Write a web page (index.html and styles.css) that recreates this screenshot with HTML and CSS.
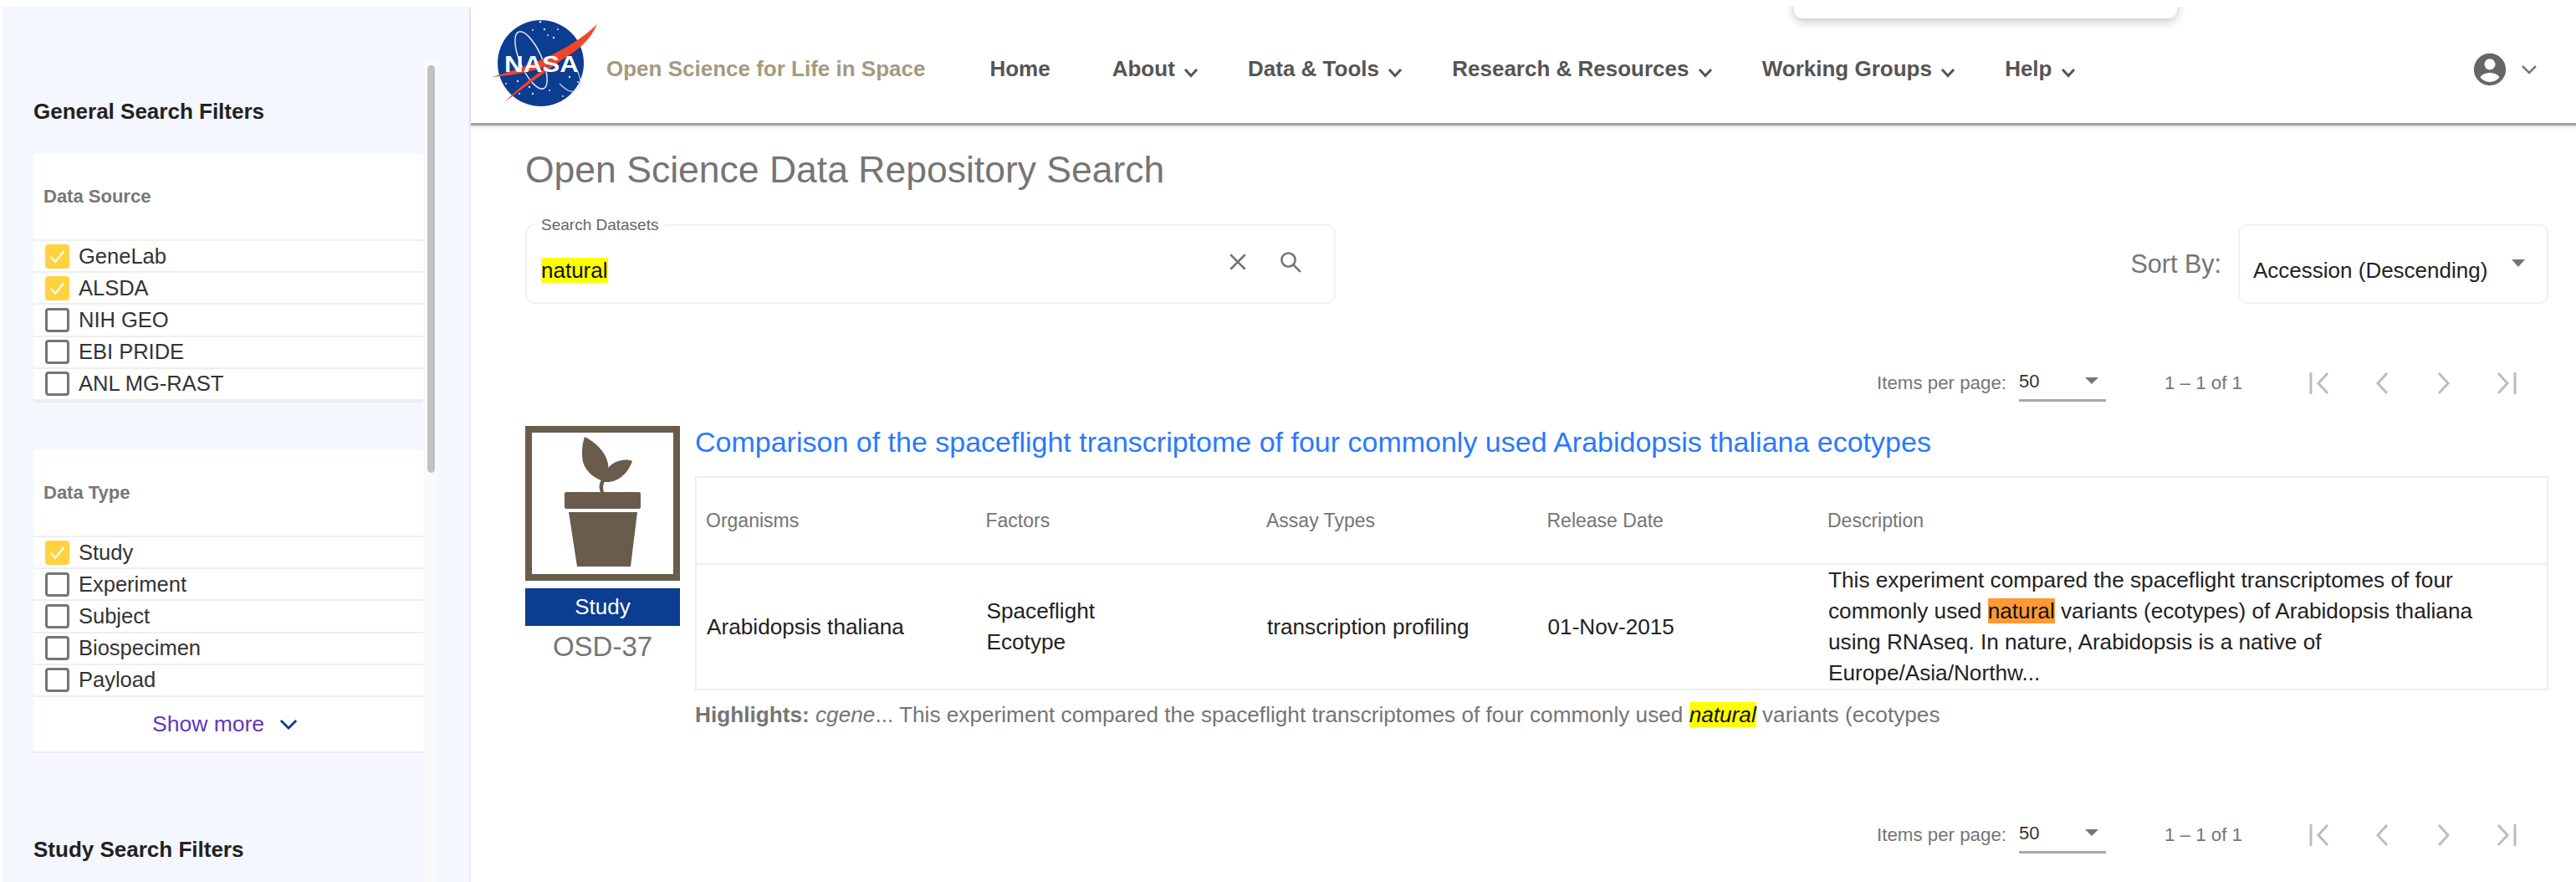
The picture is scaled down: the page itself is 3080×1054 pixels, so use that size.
FILE: index.html
```html
<!DOCTYPE html>
<html lang="en">
<head>
  <meta charset="UTF-8">
  <meta name="viewport" content="width=device-width, initial-scale=1.0">
  <title>Open Science Data Repository Search</title>
  <link rel="stylesheet" href="styles.css">
</head>
<body>
  <div class="page">
    <aside class="sidebar">
      <div class="filters">
        <h3 class="filters-title first">General Search Filters</h3>
        <section class="filter-card">
          <h4 class="filter-name">Data Source</h4>
          <label class="filter-row"><span class="box checked"><svg viewBox="0 0 24 24"><path d="M5 12.5l5 5 9-11"/></svg></span>GeneLab</label>
          <label class="filter-row"><span class="box checked"><svg viewBox="0 0 24 24"><path d="M5 12.5l5 5 9-11"/></svg></span>ALSDA</label>
          <label class="filter-row"><span class="box"></span>NIH GEO</label>
          <label class="filter-row"><span class="box"></span>EBI PRIDE</label>
          <label class="filter-row"><span class="box"></span>ANL MG-RAST</label>
        </section>
        <section class="filter-card second">
          <h4 class="filter-name">Data Type</h4>
          <label class="filter-row"><span class="box checked"><svg viewBox="0 0 24 24"><path d="M5 12.5l5 5 9-11"/></svg></span>Study</label>
          <label class="filter-row"><span class="box"></span>Experiment</label>
          <label class="filter-row"><span class="box"></span>Subject</label>
          <label class="filter-row"><span class="box"></span>Biospecimen</label>
          <label class="filter-row"><span class="box"></span>Payload</label>
          <div class="show-more">Show more
            <svg class="show-chevron" viewBox="0 0 24 14"><path d="M2 2l10 10L22 2"/></svg>
          </div>
        </section>
        <h3 class="filters-title">Study Search Filters</h3>
      </div>
      <div class="scroll-track"><div class="scroll-thumb"></div></div>
    </aside>

    <main class="main">
      <header class="nav">
        <svg class="logo" viewBox="0 0 130 112">
          <circle cx="61.5" cy="55.5" r="51.5" fill="#0b3d91"/>
          <ellipse cx="50" cy="52" rx="13" ry="37" transform="rotate(-24 50 52)" fill="none" stroke="#dfe6f2" stroke-width="1.5"/>
          <path d="M84 80c8 8 16 14 24 4 2-6 0-14-3-20" fill="none" stroke="#c9d5ea" stroke-width="1.2"/>
          <g fill="#dfe6f2">
            <circle cx="61" cy="6" r="1.3"/><circle cx="52" cy="16" r="1"/><circle cx="66" cy="15" r="1.2"/>
            <circle cx="70" cy="22" r="1"/><circle cx="82" cy="15" r="1"/><circle cx="77" cy="25" r="1.2"/>
            <circle cx="20" cy="80" r="1"/><circle cx="34" cy="77" r="1.2"/><circle cx="48" cy="84" r="1.2"/>
            <circle cx="36" cy="92" r="1"/><circle cx="52" cy="92" r="1.2"/><circle cx="72" cy="88" r="1"/>
            <circle cx="96" cy="72" r="1.2"/><circle cx="88" cy="95" r="1"/><circle cx="106" cy="78" r="1"/>
          </g>
          <path d="M3 72C40 62 95 42 129 9 112 48 62 68 3 72z" fill="#f0452a"/>
          <path d="M18 102C44 76 74 55 106 37 78 58 48 80 18 102z" fill="#f0452a"/>
          <text class="logo-text" x="18" y="66" textLength="89" lengthAdjust="spacingAndGlyphs">NASA</text>
        </svg>
        <span class="brand">Open Science for Life in Space</span>
        <nav class="nav-links">
          <a class="nav-link home">Home</a>
          <a class="nav-link">About <svg class="nav-chevron" viewBox="0 0 18 12"><path d="M2 2l7 7.500L16 2"/></svg></a>
          <a class="nav-link">Data &amp; Tools <svg class="nav-chevron" viewBox="0 0 18 12"><path d="M2 2l7 7.500L16 2"/></svg></a>
          <a class="nav-link">Research &amp; Resources <svg class="nav-chevron" viewBox="0 0 18 12"><path d="M2 2l7 7.500L16 2"/></svg></a>
          <a class="nav-link">Working Groups <svg class="nav-chevron" viewBox="0 0 18 12"><path d="M2 2l7 7.500L16 2"/></svg></a>
          <a class="nav-link">Help <svg class="nav-chevron" viewBox="0 0 18 12"><path d="M2 2l7 7.500L16 2"/></svg></a>
        </nav>
        <div class="account">
          <svg class="avatar" viewBox="0 0 24 24"><path d="M12 2a10 10 0 1 0 0 20 10 10 0 0 0 0-20zm0 3.4a3.4 3.4 0 1 1 0 6.8 3.4 3.4 0 0 1 0-6.8zm0 14.4a7.8 7.8 0 0 1-6-2.8c.6-1.8 3.7-2.9 6-2.9s5.4 1.100 6 2.900a7.800 7.800 0 0 1-6 2.800z"/></svg>
          <svg class="account-chevron" viewBox="0 0 20 12"><path d="M2 2l8 8 8-8"/></svg>
        </div>
        <div class="popup"></div>
      </header>

      <div class="content">
        <h1 class="page-title">Open Science Data Repository Search</h1>

        <div class="search-row">
          <div class="search-box">
            <span class="search-label">Search Datasets</span>
            <span class="search-value"><mark class="hit">natural</mark></span>
            <svg class="search-icon" viewBox="0 0 24 24"><path d="M5 5l14 14M19 5L5 19"/></svg>
            <svg class="search-icon" viewBox="0 0 24 24"><circle cx="10" cy="10" r="6.500"/><path d="M15 15l6.500 6.500"/></svg>
          </div>
          <div class="sort">
            <span class="sort-label">Sort By:</span>
            <div class="sort-select">
              <span class="sort-value">Accession (Descending)</span>
              <span class="caret"></span>
            </div>
          </div>
        </div>

        <div class="pager">
          <span class="pager-label">Items per page:</span>
          <div class="pager-select"><span>50</span><span class="caret small"></span></div>
          <span class="pager-label range">1 – 1 of 1</span>
          <svg class="pager-icon" viewBox="0 0 30 30"><path d="M4 2v26M24 3L13 15l11 12"/></svg>
          <svg class="pager-icon" viewBox="0 0 30 30"><path d="M21 3L10 15l11 12"/></svg>
          <svg class="pager-icon" viewBox="0 0 30 30"><path d="M9 3l11 12L9 27"/></svg>
          <svg class="pager-icon" viewBox="0 0 30 30"><path d="M26 2v26M6 3l11 12L6 27"/></svg>
        </div>

        <article class="result">
          <div class="result-side">
            <div class="result-thumb">
              <svg viewBox="0 0 169 169">
                <g fill="#6a5c4d">
                  <path d="M63 5c14 7 25 18 28 32 1 9 0 15-2 22-13-3-24-11-28-24-2-10-1-21 2-30z"/>
                  <path d="M120 34c-3 9-10 19-20 23-7 3-13 2-17 1 3-11 10-21 20-24 6-2 12-2 17 0z"/>
                  <path d="M82 71c-3-8-1-13 5-19l2 2c-3 5-5 10-3 17z"/>
                  <rect x="39" y="71" width="91" height="20" rx="2"/>
                  <path d="M44 95h82l-8 65H54z"/>
                </g>
              </svg>
            </div>
            <div class="result-type">Study</div>
            <div class="result-id">OSD-37</div>
          </div>
          <div class="result-body">
            <a class="result-title">Comparison of the spaceflight transcriptome of four commonly used Arabidopsis thaliana ecotypes</a>
            <table class="result-table">
              <thead>
                <tr>
                  <th>Organisms</th>
                  <th>Factors</th>
                  <th>Assay Types</th>
                  <th>Release Date</th>
                  <th>Description</th>
                </tr>
              </thead>
              <tbody>
                <tr>
                  <td>Arabidopsis thaliana</td>
                  <td>Spaceflight<br>Ecotype</td>
                  <td>transcription profiling</td>
                  <td>01-Nov-2015</td>
                  <td>This experiment compared the spaceflight transcriptomes of four<br>commonly used <mark class="hit-orange">natural</mark> variants (ecotypes) of Arabidopsis thaliana<br>using RNAseq. In nature, Arabidopsis is a native of<br>Europe/Asia/Northw...</td>
                </tr>
              </tbody>
            </table>
            <p class="highlights"><b>Highlights:</b> <i>cgene</i>... This experiment compared the spaceflight transcriptomes of four commonly used <mark class="hit"><i>natural</i></mark> variants (ecotypes</p>
          </div>
        </article>

        <div class="pager bottom">
          <span class="pager-label">Items per page:</span>
          <div class="pager-select"><span>50</span><span class="caret small"></span></div>
          <span class="pager-label range">1 – 1 of 1</span>
          <svg class="pager-icon" viewBox="0 0 30 30"><path d="M4 2v26M24 3L13 15l11 12"/></svg>
          <svg class="pager-icon" viewBox="0 0 30 30"><path d="M21 3L10 15l11 12"/></svg>
          <svg class="pager-icon" viewBox="0 0 30 30"><path d="M9 3l11 12L9 27"/></svg>
          <svg class="pager-icon" viewBox="0 0 30 30"><path d="M26 2v26M6 3l11 12L6 27"/></svg>
        </div>
      </div>
    </main>
  </div>
</body>
</html>
```

FILE: styles.css
```css
* {
  box-sizing: border-box;
}

html,
body {
  height: 100%;
  overflow: hidden;
}

body {
  margin: 0;
  padding: 8px 0 0 3px;
  background-color: #fff;
  font-family: "Liberation Sans", Arial, sans-serif;
  color: #333;
}

.page {
  display: flex;
  height: 1046px;
  overflow: hidden;
}

/* sidebar */
.sidebar {
  display: flex;
  flex: none;
  width: 560px;
  padding-left: 37px;
  background-color: #f4f7fe;
  border-right: 2px solid #e9ebf1;
}

.filters {
  width: 466px;
  flex: none;
}

.scroll-track {
  width: 17px;
  flex: none;
  margin-top: 65px;
  padding: 5px 3px 0 5px;
  background-color: #fafafa;
}

.scroll-thumb {
  height: 487px;
  border-radius: 5px;
  background-color: #c1c1c1;
}

.filters-title {
  margin: 100px 0 0;
  font-size: 26px;
  line-height: 30px;
  font-weight: bold;
  color: #222;
}

.filters-title.first {
  margin-top: 110px;
}

.filter-card {
  margin-top: 36px;
  background-color: #fff;
  border-bottom: 2px solid #ececf0;
}

.filter-card.second {
  margin-top: 57px;
}

.filter-name {
  display: flex;
  align-items: center;
  height: 104px;
  margin: 0;
  padding-left: 12px;
  font-size: 22px;
  font-weight: bold;
  color: #777;
  border-bottom: 2px solid #eee;
}

.filter-row {
  display: flex;
  align-items: center;
  height: 38.200px;
  padding-left: 14px;
  font-size: 25.500px;
  color: #333;
  border-bottom: 2px solid #eee;
}

.box {
  flex: none;
  width: 29px;
  height: 29px;
  margin-right: 11px;
  border: 3px solid #757575;
  border-radius: 4px;
}

.box.checked {
  padding: 1px;
  border: none;
  background-color: #ffd23f;
}

.box svg {
  display: block;
  fill: none;
  stroke: #fff;
  stroke-width: 2;
}

.show-more {
  display: flex;
  align-items: center;
  justify-content: center;
  height: 65px;
  padding-right: 8px;
  font-size: 26.500px;
  font-weight: 500;
  color: #5f37c2;
}

.show-chevron {
  width: 22px;
  height: 13px;
  margin-left: 18px;
  fill: none;
  stroke: #0b3d91;
  stroke-width: 3;
}

/* top nav */
.main {
  flex: 1;
  min-width: 0;
}

.nav {
  position: relative;
  display: flex;
  align-items: center;
  height: 142px;
  padding: 10px 46px 0 22px;
  border-bottom: 3px solid #a2a2a2;
  box-shadow: 0 2px 3px rgba(0, 0, 0, 0.12);
}

.logo {
  flex: none;
  align-self: flex-start;
  width: 130px;
  height: 112px;
  margin-top: 2px;
}

.logo-text {
  font-size: 27px;
  font-weight: bold;
  fill: #fff;
}

.brand {
  margin-left: 10px;
  font-size: 26px;
  font-weight: bold;
  color: #a59a80;
}

.nav-links {
  display: flex;
  align-items: center;
  gap: 59px;
  margin-left: 77px;
}

.nav-link {
  display: flex;
  align-items: center;
  font-size: 26px;
  font-weight: bold;
  color: #555;
  white-space: pre;
}

.nav-link.home {
  margin-right: 15px;
}

.nav-chevron {
  width: 18px;
  height: 12px;
  margin: 8px 0 0 3px;
  fill: none;
  stroke: #555;
  stroke-width: 3;
}

.account {
  display: flex;
  align-items: center;
  margin-left: auto;
}

.avatar {
  width: 46px;
  height: 46px;
  fill: #666;
}

.account-chevron {
  width: 20px;
  height: 12px;
  margin-left: 14px;
  fill: none;
  stroke: #777;
  stroke-width: 2.500;
}

.popup {
  position: absolute;
  top: -20px;
  left: 1582px;
  width: 458px;
  height: 34px;
  border-radius: 0 0 10px 10px;
  background-color: #fff;
  box-shadow: 0 4px 12px rgba(0, 0, 0, 0.22);
}

/* page content */
.content {
  padding: 0 33px 0 65px;
}

.page-title {
  margin: 28px 0 0;
  font-size: 44.500px;
  line-height: 50px;
  font-weight: normal;
  color: #757575;
}

.search-row {
  display: flex;
  justify-content: space-between;
  margin-top: 40px;
}

.search-box {
  position: relative;
  display: flex;
  align-items: center;
  gap: 33px;
  width: 969px;
  height: 95px;
  padding: 0 37px 0 17px;
  border: 2px solid #f0f0f0;
  border-radius: 10px;
}

.search-label {
  position: absolute;
  top: -11px;
  left: 9px;
  padding: 0 8px;
  background-color: #fff;
  font-size: 19px;
  line-height: 20px;
  color: #666;
}

.search-value {
  flex: 1;
  padding-top: 15px;
  font-size: 26px;
  color: #111;
}

.hit {
  padding: 0;
  background-color: #ffff00;
  color: #111;
}

.hit-orange {
  padding: 0;
  background-color: #ff9933;
  color: #111;
}

.search-icon {
  width: 30px;
  height: 30px;
  margin-bottom: 6px;
  fill: none;
  stroke: #757575;
  stroke-width: 2;
}

.sort {
  display: flex;
  align-items: center;
  gap: 20px;
}

.sort-label {
  font-size: 30.500px;
  color: #757575;
}

.sort-select {
  display: flex;
  align-items: center;
  justify-content: space-between;
  width: 371px;
  height: 95px;
  padding: 0 26px 0 16px;
  border: 2px solid #f0f0f0;
  border-radius: 10px;
}

.sort-value {
  padding-top: 15px;
  font-size: 26px;
  color: #222;
}

.caret {
  width: 0;
  height: 0;
  margin-bottom: 2px;
  border-left: 8px solid transparent;
  border-right: 8px solid transparent;
  border-top: 9px solid #757575;
}

/* paginator */
.pager {
  display: flex;
  align-items: center;
  justify-content: flex-end;
  height: 44px;
  margin-top: 73px;
  padding-right: 36px;
}

.pager.bottom {
  margin-top: 107px;
}

.pager-label {
  font-size: 22.300px;
  color: #757575;
}

.pager-select {
  display: flex;
  align-items: center;
  justify-content: space-between;
  width: 104px;
  height: 44px;
  margin-left: 15px;
  padding: 0 9px 2px 0;
  border-bottom: 3px solid #a8a8a8;
  font-size: 22px;
  color: #333;
}

.caret.small {
  border-left-width: 8px;
  border-right-width: 8px;
  border-top-width: 8px;
}

.range {
  margin: 0 78px 0 70px;
}

.pager-icon {
  width: 30px;
  height: 30px;
  margin-left: 44px;
  fill: none;
  stroke: #bdbdbd;
  stroke-width: 3;
}

.pager-icon:nth-of-type(1) {
  margin-left: 0;
}

/* result card */
.result {
  display: flex;
  gap: 18px;
  margin-top: 29px;
}

.result-side {
  flex: none;
  width: 185px;
}

.result-thumb {
  width: 185px;
  height: 185px;
  border: 8px solid #6a5c4d;
}

.result-thumb svg {
  display: block;
  width: 169px;
  height: 169px;
}

.result-type {
  height: 45px;
  margin-top: 9px;
  background-color: #0b3d91;
  font-size: 26px;
  line-height: 45px;
  text-align: center;
  color: #fff;
}

.result-id {
  margin-top: 5px;
  font-size: 33px;
  line-height: 40px;
  text-align: center;
  color: #757575;
}

.result-body {
  flex: 1;
  min-width: 0;
}

.result-title {
  display: block;
  margin-top: -1px;
  font-size: 34px;
  line-height: 40px;
  color: #2979ff;
}

.result-table {
  width: 100%;
  margin-top: 21px;
  border-collapse: collapse;
  table-layout: fixed;
  border: 2px solid #eee;
}

.result-table th {
  width: 335.500px;
  height: 104px;
  padding: 0 0 0 11px;
  font-size: 23px;
  font-weight: normal;
  text-align: left;
  color: #757575;
  border-bottom: 2px solid #eee;
}

.result-table th:last-child {
  width: auto;
}

.result-table td {
  padding: 0 0 0 12px;
  font-size: 26.200px;
  line-height: 37px;
  color: #222;
}

.highlights {
  margin: 14px 0 0;
  font-size: 26.200px;
  line-height: 30px;
  color: #757575;
}
```
